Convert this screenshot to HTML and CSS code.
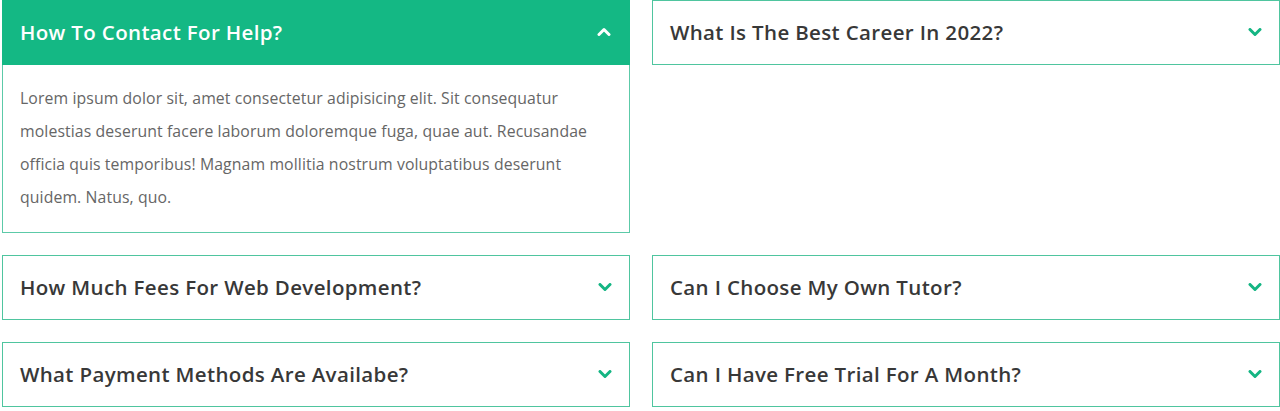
FILE: index.html
```html
<!DOCTYPE html>
<html lang="en">
<head>
<meta charset="utf-8">
<title>FAQ</title>
<link rel="stylesheet" href="styles.css">
</head>
<body>
<div class="faq">
  <div class="item open">
    <div class="head">
      <span class="q">How To Contact For Help?</span>
      <svg class="chev" width="14" height="9" viewBox="0 0 14 9"><path d="M2 7.5 L7 2.5 L12 7.5" fill="none" stroke="currentColor" stroke-width="3" stroke-linecap="round" stroke-linejoin="round"/></svg>
    </div>
    <div class="body">Lorem ipsum dolor sit, amet consectetur adipisicing elit. Sit consequatur molestias deserunt facere laborum doloremque fuga, quae aut. Recusandae officia quis temporibus! Magnam mollitia nostrum voluptatibus deserunt quidem. Natus, quo.</div>
  </div>
  <div class="item">
    <div class="head">
      <span class="q">What Is The Best Career In 2022?</span>
      <svg class="chev" width="14" height="9" viewBox="0 0 14 9"><path d="M2 1.5 L7 6.5 L12 1.5" fill="none" stroke="currentColor" stroke-width="3" stroke-linecap="round" stroke-linejoin="round"/></svg>
    </div>
  </div>
  <div class="item">
    <div class="head">
      <span class="q">How Much Fees For Web Development?</span>
      <svg class="chev" width="14" height="9" viewBox="0 0 14 9"><path d="M2 1.5 L7 6.5 L12 1.5" fill="none" stroke="currentColor" stroke-width="3" stroke-linecap="round" stroke-linejoin="round"/></svg>
    </div>
  </div>
  <div class="item">
    <div class="head">
      <span class="q">Can I Choose My Own Tutor?</span>
      <svg class="chev" width="14" height="9" viewBox="0 0 14 9"><path d="M2 1.5 L7 6.5 L12 1.5" fill="none" stroke="currentColor" stroke-width="3" stroke-linecap="round" stroke-linejoin="round"/></svg>
    </div>
  </div>
  <div class="item">
    <div class="head">
      <span class="q">What Payment Methods Are Availabe?</span>
      <svg class="chev" width="14" height="9" viewBox="0 0 14 9"><path d="M2 1.5 L7 6.5 L12 1.5" fill="none" stroke="currentColor" stroke-width="3" stroke-linecap="round" stroke-linejoin="round"/></svg>
    </div>
  </div>
  <div class="item">
    <div class="head">
      <span class="q">Can I Have Free Trial For A Month?</span>
      <svg class="chev" width="14" height="9" viewBox="0 0 14 9"><path d="M2 1.5 L7 6.5 L12 1.5" fill="none" stroke="currentColor" stroke-width="3" stroke-linecap="round" stroke-linejoin="round"/></svg>
    </div>
  </div>
</div>
</body>
</html>
```
FILE: styles.css
```css
* { box-sizing: border-box; }
html, body { margin: 0; padding: 0; background: #fff; }
body { font-family: "Open Sans", "Noto Sans", sans-serif; }
.faq {
  display: grid;
  grid-template-columns: 628px 628px;
  column-gap: 22px;
  row-gap: 22px;
  padding: 0 1px 0 2px;
  align-items: start;
}
.item { border: 1px solid #4fc59f; background: #fff; }
.head {
  height: 63px;
  display: flex;
  align-items: center;
  justify-content: space-between;
  padding: 0 17px 2px 17px;
  color: #383838;
}
.q { font-size: 20.5px; font-weight: 600; letter-spacing: 0.35px; }
.chev { color: #14b583; display: block; margin-top: 2px; }
.item.open { border-color: #5ccaa8; border-top: 0; }
.item.open .head { background: #14b884; color: #fff; margin: 0 -1px; height: 65px; padding: 0 19px 2px 18px; }
.item.open .chev { color: #fff; margin-top: 0; }
.body {
  padding: 17px 17px 18px 17px;
  font-size: 15.8px;
  line-height: 33px;
  letter-spacing: 0.1px;
  color: #666;
}
```
